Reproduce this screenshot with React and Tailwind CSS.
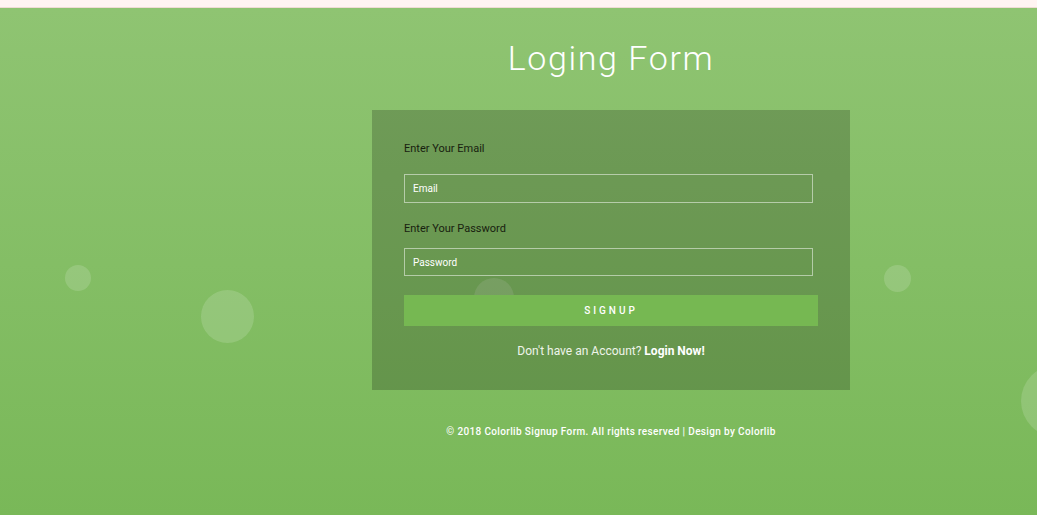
import React from 'react';

const bubbles = [
  { cls: 'left-[65px] top-[257px] w-[26px] h-[26px]' },
  { cls: 'left-[201px] top-[282px] w-[53px] h-[53px]' },
  { cls: 'left-[474px] top-[270px] w-[40px] h-[40px]' },
  { cls: 'left-[884px] top-[257px] w-[27px] h-[27px]' },
  { cls: 'left-[1021px] top-[357px] w-[72px] h-[72px]' },
];

const App = () => {
  return (
    <div className="w-[1037px] h-[515px] overflow-hidden font-['Roboto',sans-serif]">
      {/* top strip */}
      <div className="h-[8px] bg-[#fff4f2] border-b border-[#f0dcd5]"></div>

      {/* Main */}
      <div className="relative h-[507px] overflow-hidden bg-gradient-to-b from-[#8fc472] to-[#79b858]">
        {bubbles.map((b, i) => (
          <div key={i} className={`absolute rounded-full bg-white/15 ${b.cls}`}></div>
        ))}

        <div className="relative z-10 ml-[372px] w-[478px] pt-[30px]">
          <h1 className="text-center text-[34px] leading-[40px] font-light tracking-[1.6px] text-white">
            Loging Form
          </h1>

          {/* Form */}
          <div className="mt-[32px] h-[280px] bg-black/20 pl-[32px] pt-[31px]">
            <p className="text-[11px] leading-[16px] text-[#18210f]">Enter Your Email</p>
            <div className="mt-[17px] w-[409px] h-[29px] border border-white/50 flex items-center pl-[8px]">
              <span className="text-[10px] text-white">Email</span>
            </div>
            <p className="mt-[18px] text-[11px] leading-[16px] text-[#18210f]">Enter Your Password</p>
            <div className="mt-[11px] w-[409px] h-[28px] border border-white/50 flex items-center pl-[8px]">
              <span className="text-[10px] text-white">Password</span>
            </div>
            <button className="mt-[19px] w-[414px] h-[31px] bg-[#76b852] text-white text-[10px] font-medium tracking-[3px]">
              SIGNUP
            </button>
            <p className="mt-[17px] w-[414px] text-center text-[12px] leading-[16px] text-[#eef4ea]">
              Don't have an Account? <span className="font-bold text-white">Login Now!</span>
            </p>
          </div>

          <p className="mt-[34px] text-center text-[10px] font-medium tracking-[0.36px] text-white">
            © 2018 Colorlib Signup Form. All rights reserved | Design by Colorlib
          </p>
        </div>
      </div>
    </div>
  );
};

export default App;
